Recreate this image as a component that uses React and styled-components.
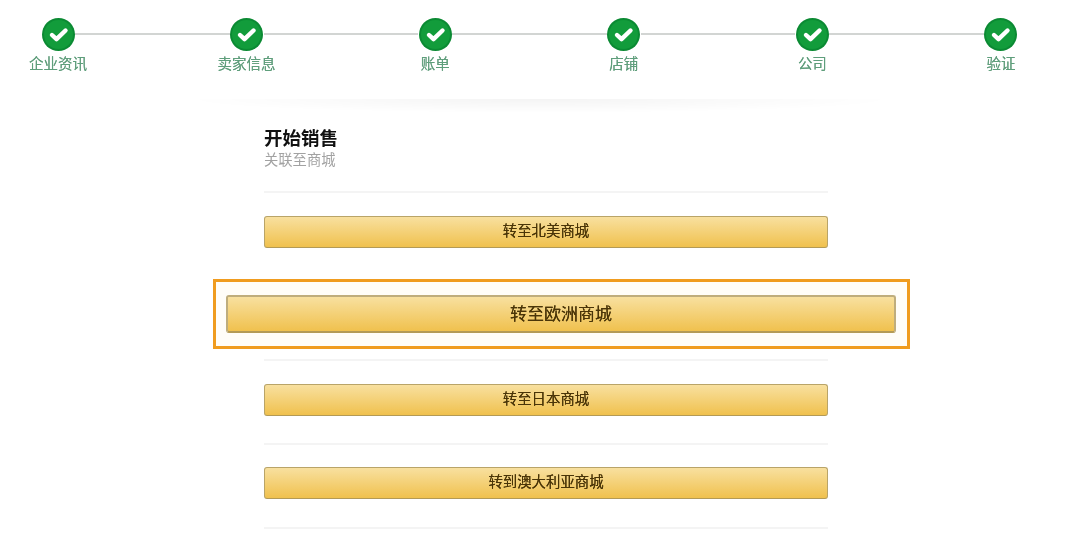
import React from "react";
import styled, { createGlobalStyle } from "styled-components";

const Global = createGlobalStyle`
  html, body { margin: 0; padding: 0; background: #fff; }
  body { font-family: "Liberation Sans", "Noto Sans CJK SC", sans-serif; overflow: hidden; }
`;

const Page = styled.div`
  width: 1080px;
  height: 555px;
  overflow: hidden;
  filter: blur(0.6px);
`;

const Stepper = styled.div`
  display: flex;
  align-items: flex-start;
  padding: 18px 50px 0 29px;
  height: 99px;
  box-sizing: border-box;
`;

const Step = styled.div`
  width: 58px;
  flex: none;
  display: flex;
  flex-direction: column;
  align-items: center;
  gap: 4px;
`;

const Badge = styled.svg`
  width: 33px;
  height: 33px;
  display: block;
`;

const StepLabel = styled.div`
  font-size: 14.5px;
  line-height: 18px;
  color: #5f9f7c;
  white-space: nowrap;
  text-shadow: 0 0 0.5px #6f9f85;
`;

const Connector = styled.div`
  flex: 1;
  height: 2px;
  margin: 15px -12px 0;
  background: #d2d5d3;
`;

const Glow = styled.div`
  width: 720px;
  height: 14px;
  margin: 0 0 0 180px;
  background: radial-gradient(ellipse at 50% 0, rgba(0, 0, 0, 0.045), rgba(0, 0, 0, 0) 70%);
`;

const Main = styled.div`
  width: 564px;
  margin-left: 264px;
  margin-top: 15px;
`;

const Title = styled.h1`
  margin: 0;
  font-size: 18.5px;
  line-height: 22px;
  font-weight: 700;
  color: #111;
`;

const Subtitle = styled.div`
  font-size: 14.3px;
  line-height: 18px;
  margin-top: 1px;
  color: #a2a2a2;
`;

const Divider = styled.div`
  height: 2px;
  background: #f4f4f4;
  margin-top: ${(p) => p.$top}px;
`;

const MarketButton = styled.button`
  display: block;
  width: 100%;
  box-sizing: border-box;
  height: ${(p) => (p.$large ? 38 : 32)}px;
  margin-top: ${(p) => p.$top ?? 0}px;
  padding: 0 0 ${(p) => (p.$large ? 0 : 2)}px;
  border: ${(p) => (p.$large ? 2 : 1)}px solid ${(p) => (p.$large ? "#bfad7c" : "#b9a468")};
  border-bottom-color: #b39a56;
  border-radius: 3px;
  background: linear-gradient(#f8e09f, #f0c14e);
  font-family: inherit;
  font-size: ${(p) => (p.$large ? 17 : 14.4)}px;
  line-height: 1;
  color: #4a3508;
  text-shadow: 0 0 0.6px #4a3508;
`;

const Highlight = styled.div`
  box-sizing: border-box;
  height: 70px;
  margin: 31px -82px 0 -51px;
  padding: 13px 11px 0 10px;
  border: 3px solid #f09c1f;
  background: #fffdf8;
`;

const Check = () => (
  <Badge viewBox="0 0 33 33">
    <circle cx="16.5" cy="16.5" r="16.5" fill="#0b8a33" />
    <circle cx="16.5" cy="16.5" r="14.5" fill="#129c3b" />
    <path
      d="M10 17 L14.5 21.2 L23.5 12.5"
      fill="none"
      stroke="#fff"
      strokeWidth="4.4"
      strokeLinecap="round"
      strokeLinejoin="round"
    />
  </Badge>
);

const steps = ["企业资讯", "卖家信息", "账单", "店铺", "公司", "验证"];

export default function App() {
  return (
    <Page>
      <Global />
      <Stepper>
        {steps.map((s, i) => (
          <React.Fragment key={s}>
            {i > 0 && <Connector />}
            <Step>
              <Check />
              <StepLabel>{s}</StepLabel>
            </Step>
          </React.Fragment>
        ))}
      </Stepper>
      <Glow />
      <Main>
        <Title>开始销售</Title>
        <Subtitle>关联至商城</Subtitle>
        <Divider $top={22} />
        <MarketButton $top={23}>转至北美商城</MarketButton>
        <Highlight>
          <MarketButton $large>转至欧洲商城</MarketButton>
        </Highlight>
        <Divider $top={10} />
        <MarketButton $top={23}>转至日本商城</MarketButton>
        <Divider $top={27} />
        <MarketButton $top={22}>转到澳大利亚商城</MarketButton>
        <Divider $top={28} />
      </Main>
    </Page>
  );
}
